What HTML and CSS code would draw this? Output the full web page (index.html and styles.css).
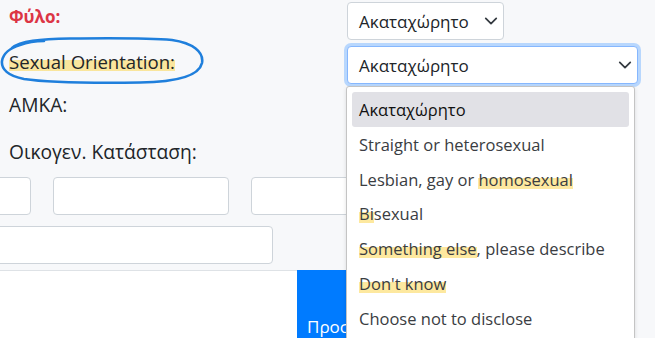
FILE: index.html
```html
<!doctype html>
<html>
    <head>
        <meta charset="utf-8" />
        <title>Στοιχεία ασθενούς</title>
        <link rel="stylesheet" href="styles.css">
    </head>
    <body>
        <div class="form">
            <div class="row row-1">
                <label class="lbl lbl-required">Φύλο:</label>
                <div class="select select-small">
                    <span>Ακαταχώρητο</span>
                    <svg class="chev" viewBox="0 0 16 16" width="16" height="16"><path d="M2 5l6 6 6-6" fill="none" stroke="#343a40" stroke-width="2" stroke-linecap="round" stroke-linejoin="round"/></svg>
                </div>
            </div>
            <div class="row row-2">
                <label class="lbl"><span class="mark">Sexual Orientation:</span></label>
                <div class="select select-wide focused">
                    <span>Ακαταχώρητο</span>
                    <svg class="chev" viewBox="0 0 16 16" width="16" height="16"><path d="M2 5l6 6 6-6" fill="none" stroke="#343a40" stroke-width="2" stroke-linecap="round" stroke-linejoin="round"/></svg>
                </div>
            </div>
            <div class="row row-3">
                <label class="lbl lbl-gr">ΑΜΚΑ:</label>
            </div>
            <div class="row row-4">
                <label class="lbl lbl-gr">Οικογεν. Κατάσταση:</label>
            </div>
            <div class="inputs">
                <input class="input" type="text" />
                <input class="input" type="text" />
                <input class="input" type="text" />
            </div>
            <div class="inputs-2">
                <input class="input input-long" type="text" />
            </div>
            <div class="footer">
                <div class="panel"></div>
                <button class="btn">Προσθήκη</button>
            </div>
        </div>

        <svg class="circle" width="210" height="52" viewBox="0 0 210 52">
            <path d="M12 12 C20 5 40 3 70 2.5 C110 2 150 2 172 4 C193 7 204 16 202 27 C199 40 176 46 140 46.5 C100 47 50 47 24 43 C8 40 1 33 2 25 C3 18 10 12 20 9 C28 6 36 5 44 5" fill="none" stroke="#1f7fdc" stroke-width="2.6" stroke-linecap="round"/>
        </svg>

        <ul class="dropdown">
            <li class="opt active">Ακαταχώρητο</li>
            <li class="opt">Straight or heterosexual</li>
            <li class="opt">Lesbian, gay or <span class="mark">homosexual</span></li>
            <li class="opt"><span class="mark">Bi</span>sexual</li>
            <li class="opt"><span class="mark">Something else</span>, please describe</li>
            <li class="opt"><span class="mark">Don't know</span></li>
            <li class="opt">Choose not to disclose</li>
        </ul>
    </body>
</html>
```

FILE: styles.css
```css
body {
    margin: 0;
    background-color: #f7f8fa;
    font-family: "Open Sans", "Noto Sans", sans-serif;
    font-size: 16px;
    color: #212529;
    overflow: hidden;
    height: 338px;
}

.form {
    display: flex;
    flex-direction: column;
}

.row {
    display: flex;
    align-items: flex-start;
}

.row-1 { height: 44px; }
.row-2 { height: 44px; }
.row-3 { height: 46px; }
.row-4 { height: 36px; }

.lbl {
    width: 338px;
    padding-left: 9px;
    line-height: 24px;
    padding-top: 5px;
    font-size: 18.6px;
}

.lbl-gr {
    font-size: 19.2px;
}

.row-2 .lbl,
.row-4 .lbl {
    padding-top: 6px;
}

.lbl-required {
    color: #dc3545;
    font-weight: bold;
    font-size: 17px;
}

.mark {
    background: linear-gradient(transparent 45%, rgba(252, 214, 80, 0.55) 45%, rgba(252, 214, 80, 0.55) 90%, transparent 90%);
}

.select {
    margin-top: 2px;
    box-sizing: border-box;
    height: 38px;
    background-color: #fff;
    border: 1px solid #ced4da;
    border-radius: 4px;
    display: flex;
    align-items: center;
    justify-content: space-between;
    padding: 0 5px 0 11px;
    color: #212529;
    font-size: 17px;
}

.select-small {
    width: 157px;
}

.select-wide {
    width: 291px;
}

.focused {
    border-color: #86b7fe;
    box-shadow: 0 0 0 3px #b8d7fd;
}

.chev {
    width: 14px;
    height: 14px;
}

.inputs {
    display: flex;
    gap: 22px;
    margin-top: 7px;
    margin-left: -145px;
}

.input {
    box-sizing: border-box;
    width: 176px;
    height: 38px;
    background: #fff;
    border: 1px solid #ced4da;
    border-radius: 4px;
    margin: 0;
}

.inputs-2 {
    margin-top: 11px;
    margin-left: -145px;
}

.input-long {
    width: 418px;
}

.footer {
    display: flex;
    margin-top: 6px;
    height: 80px;
}

.panel {
    width: 297px;
    background: #fff;
    border-top: 1px solid #dee2e6;
}

.btn {
    width: 120px;
    border: none;
    background-color: #007bff;
    color: #fff;
    font: inherit;
    font-size: 17px;
    text-align: left;
    padding: 34px 0 0 10px;
    align-self: stretch;
    display: block;
    line-height: 24px;
}

.circle {
    position: absolute;
    left: 0;
    top: 36px;
}

.dropdown {
    position: absolute;
    left: 346px;
    top: 86px;
    width: 289px;
    height: 256px;
    margin: 0;
    padding: 5px 5px;
    box-sizing: border-box;
    list-style: none;
    background: #fff;
    border: 1px solid #c4c4c4;
    border-radius: 3px;
    box-shadow: 0 2px 4px rgba(0, 0, 0, 0.12);
    color: #3a3d42;
    font-size: 16.5px;
}

.opt {
    height: 34.8px;
    line-height: 35px;
    padding-left: 7px;
    border-radius: 3px;
}

.opt.active {
    background-color: #e1e1e6;
    color: #111;
}
```
